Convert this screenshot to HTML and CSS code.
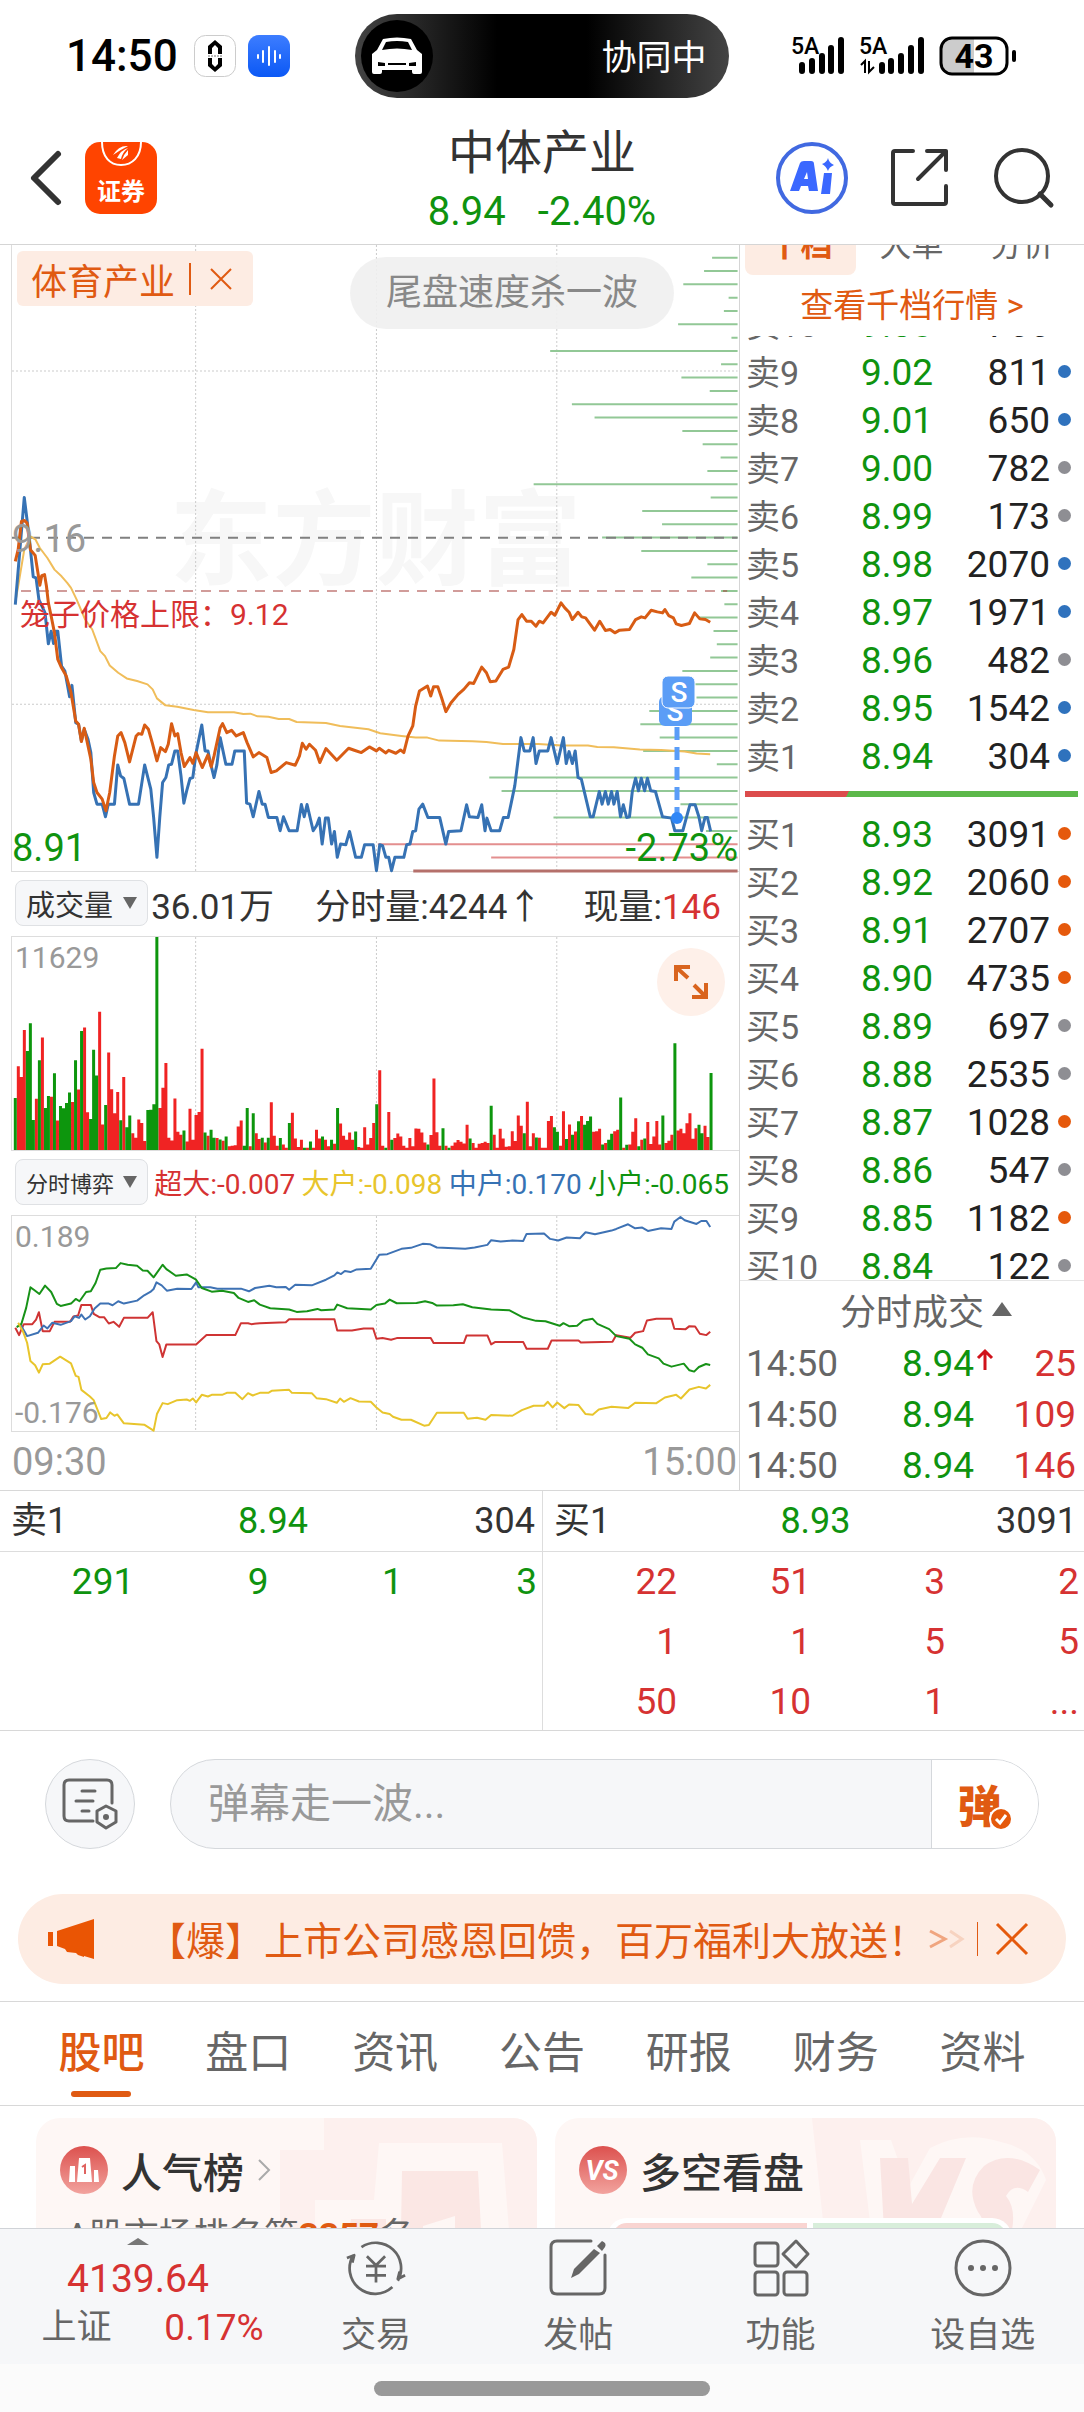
FILE: index.html
```html
<!DOCTYPE html>
<html lang="zh-CN">
<head>
<meta charset="utf-8">
<meta name="viewport" content="width=device-width, initial-scale=1">
<title>中体产业</title>
<link rel="stylesheet" href="styles.css">
</head>
<body>
<div class="app">

<div class="status">
  <div class="status-left">
    <span class="clock">14:50</span>
    <svg class="status-app" viewBox="0 0 42 42"><rect x=".5" y=".5" width="41" height="41" rx="11" fill="#fff" stroke="#ccc"/><path d="M21 5l7 6v8h-4v-6l-3-3-3 3v6h-4v-8zM21 37l7-6v-8h-4v6l-3 3-3-3v-6h-4v8z"/><path d="M14 21h14" stroke="#777" stroke-dasharray="2 1"/></svg>
    <svg class="status-app" viewBox="0 0 42 42"><defs><linearGradient id="voice" x2="0" y2="1"><stop stop-color="#3d7dff"/><stop offset="1" stop-color="#0b58f5"/></linearGradient></defs><rect width="42" height="42" rx="11" fill="url(#voice)"/><path d="M10 20v3M15 16v11M21 12v18M27 16v11M32 20v3" stroke="#fff" stroke-width="2" stroke-linecap="round"/></svg>
  </div>
  <div class="island">
    <span class="island-icon"><svg viewBox="0 0 52 38"><path d="M12 2Q26-1 40 2L46 13 51 17V35Q51 37 49 37H43Q41 37 41 35V33H11V35Q11 37 9 37H3Q1 37 1 35V17L6 13z" fill="#fff"/><path d="M15 5Q26 3 37 5L41 13Q26 10 11 13zM7 25l7 1v3H7zM45 25l-7 1v3h7zM17 26h18v2H17z" fill="#000"/></svg></span>
    <span>协同中</span>
  </div>
  <div class="status-right">
    <svg class="signal-a" viewBox="0 0 54 38"><text x="0" y="17" class="net">5A</text><path d="M11 28v6M21 24v10M31 19v15M40 11v23M50 3v31" stroke="#000" stroke-width="6" stroke-linecap="round"/></svg>
    <svg class="signal-b" viewBox="0 0 66 38"><text x="0" y="17" class="net">5A</text><path d="M23 28v6M32 24v10M42 19v15M52 11v23M62 3v31" stroke="#000" stroke-width="6" stroke-linecap="round"/><path d="M2 28l4-4v12M10 24v11l5-5" fill="none" stroke="#000" stroke-width="2"/></svg>
    <svg class="battery" viewBox="0 0 78 40"><path d="M35 2H12Q2 2 2 12V28Q2 38 12 38H35z" fill="#ccc"/><rect x="2" y="2" width="66" height="36" rx="11" fill="none" stroke="#000" stroke-width="3"/><path d="M75 16v8" stroke="#000" stroke-width="4" stroke-linecap="round"/><text x="35" y="32" text-anchor="middle" class="charge">43</text></svg>
  </div>
</div>

<header class="header">
  <div class="header-side">
    <button class="icon-btn back" aria-label="返回"><svg viewBox="0 0 32 54"><path d="M28 3L4 27 28 51" fill="none" stroke="#333" stroke-width="6" stroke-linecap="round" stroke-linejoin="round"/></svg></button>
    <a class="broker" href="#"><svg viewBox="0 0 72 32" aria-hidden="true"><path d="M17 0C17 15 25 23 36 23S56 15 56 0" fill="none" stroke="#fff" stroke-width="2"/><path d="M28 13Q34 3 43 4Q35 8 28 13zM32 16Q36 8 43 6Q37 11 36 17zM37 18Q39 12 43 8V13z" fill="#fff"/></svg><span>证券</span></a>
  </div>
  <div class="title">
    <h1>中体产业</h1>
    <p><span>8.94</span><span>-2.40%</span></p>
  </div>
  <div class="header-side header-actions">
    <button class="icon-btn ai" aria-label="Ai"><svg viewBox="0 0 72 72"><circle cx="36" cy="36" r="34" fill="none" stroke="#4169e1" stroke-width="4"/><path d="M14 49L24 21Q25 19 28 19H35Q38 19 38 22L42 49H33L32 44H25L23 49zM28 37H32L31 30zM48 31H56L54 52H45z" fill="#3b68ff" fill-rule="evenodd"/><path d="M52 16Q53 21 58 23Q53 25 52 29Q50 24 46 22Q51 20 52 16z" fill="#3b68ff"/></svg></button>
    <button class="icon-btn share" aria-label="分享"><svg viewBox="0 0 60 60"><path d="M23 3H5Q3 3 3 5V54Q3 56 5 56H54Q56 56 56 54V38M37 3H56V22M56 3L28 31" fill="none" stroke="#333" stroke-width="4" stroke-linecap="round" stroke-linejoin="round"/></svg></button>
    <button class="icon-btn search" aria-label="搜索"><svg viewBox="0 0 60 60"><circle cx="28" cy="28" r="26" fill="none" stroke="#333" stroke-width="4"/><path d="M46 46L57 57" stroke="#333" stroke-width="5" stroke-linecap="round"/></svg></button>
  </div>
</header>

<main class="content">
<section class="quote">
  <div class="charts">
    <div class="chart chart-price">
      <span class="watermark">东方财富</span>
      <svg class="plot" viewBox="25 -1006 1540 1882" preserveAspectRatio="none">
        <path class="grid" d="M414-1006V876M797-1006V876M1179-1006V876M25-627H1562M25 375H1562"/>
        <g id="depth"></g>
        <path d="M25-126H1562" stroke="#808080" stroke-width="2" stroke-dasharray="10 8"/>
        <path d="M44 34H1540" stroke="#a33a36" stroke-width="1" stroke-dasharray="10 8"/>
        <polyline class="line" stroke="#f0bd5a" points="33,60 38,20 51,-90 64,-130 75,-120 84,-95 100,-65 115,-30 130,-10 142,10 150,25 162,60 180,120 195,150 212,215 222,230 232,258 250,280 268,297 290,305 312,315 323,330 332,357 350,378 375,382 410,392 440,399 495,399 515,404 530,403 545,411 568,412 590,419 612,419 628,428 690,431 720,440 780,450 805,462 850,470 880,475 905,475 930,484 1000,486 1030,488 1065,494 1140,494 1190,499 1245,499 1265,503 1300,504 1355,511 1400,512 1450,517 1475,523 1504,525"/>
        <polyline class="line thick" stroke="#3672b4" points="32,75 51,-247 62,-120 70,-8 76,-5 82,60 95,100 102,193 108,155 113,192 118,155 122,155 130,260 137,275 147,352 152,318 160,430 166,435 172,485 178,450 186,480 192,520 198,640 205,675 216,675 223,713 229,675 242,675 249,557 255,590 262,598 274,675 293,675 306,557 319,630 325,715 332,835 338,715 344,610 351,595 357,557 363,555 370,515 376,515 383,590 389,672 395,635 402,598 408,595 415,520 427,437 434,515 440,515 446,555 453,595 459,557 466,475 478,555 491,555 497,515 517,515 522,672 529,675 536,713 548,637 555,675 561,675 568,715 586,715 593,755 600,713 612,755 629,755 638,676 644,713 650,676 663,755 670,740 676,717 682,795 689,717 695,717 702,795 708,757 714,835 721,795 732,797 740,757 753,835 765,835 772,797 790,797 797,875 804,797 810,800 817,835 823,835 829,875 836,835 855,835 861,797 868,795 874,757 880,755 887,690 895,675 906,715 931,715 944,795 950,757 976,755 988,677 994,713 1012,715 1020,677 1027,755 1031,717 1040,755 1058,755 1066,715 1076,715 1082,675 1090,620 1103,475 1110,515 1122,515 1129,475 1135,553 1142,515 1160,515 1167,475 1180,553 1193,475 1199,553 1205,517 1212,553 1218,515 1224,595 1231,600 1250,713 1256,713 1269,637 1275,675 1282,637 1288,675 1295,637 1300,675 1307,637 1314,713 1320,677 1327,715 1333,713 1339,637 1346,597 1352,635 1358,597 1365,635 1371,597 1378,635 1388,637 1403,713 1422,717 1429,755 1446,755 1454,713 1461,677 1472,677 1480,713 1486,755 1493,715 1498,715 1505,757"/>
        <polyline class="line thick" stroke="#d85c14" points="32,-55 38,-90 45,-175 51,-178 57,-170 64,-90 74,-73 80,-20 84,17 88,-12 94,-15 98,20 102,70 108,110 115,160 122,240 130,265 140,290 150,340 160,425 166,435 172,487 178,447 186,500 192,540 198,610 205,640 216,660 224,695 232,640 242,530 249,470 256,460 264,490 274,548 288,470 293,463 300,465 306,437 314,450 322,490 332,545 340,505 350,517 356,495 363,433 370,470 376,463 383,520 390,562 402,535 408,552 415,520 428,565 440,527 447,563 453,530 466,445 471,433 480,460 490,453 500,470 515,460 523,490 536,533 548,520 565,535 574,580 585,575 606,550 625,558 634,530 640,492 648,510 655,495 668,513 677,550 690,508 713,543 738,507 750,513 765,520 782,503 797,515 803,507 817,521 823,513 838,522 848,512 855,520 864,470 874,440 880,380 888,335 905,320 912,350 918,322 927,322 935,355 944,397 955,370 970,345 982,330 994,310 1003,312 1020,263 1030,280 1038,307 1050,305 1065,270 1077,263 1088,210 1097,120 1105,105 1115,125 1125,125 1135,140 1142,125 1150,130 1167,98 1175,107 1188,70 1196,85 1205,98 1212,120 1224,98 1232,112 1240,115 1259,152 1270,125 1282,153 1292,150 1302,160 1312,152 1333,150 1346,120 1358,112 1366,115 1379,92 1392,97 1403,100 1408,90 1416,108 1426,115 1432,133 1443,138 1460,132 1471,100 1482,118 1494,120 1504,128"/>
      </svg>
      <svg class="trade-mark" viewBox="0 0 40 152"><path d="M20 52V140" stroke="#5a9df8" stroke-width="5" stroke-dasharray="13 7"/><circle cx="20" cy="143" r="6" fill="#2f86f6"/><rect x="2" y="21" width="33" height="30" rx="6" fill="#5b9df6"/><text x="18" y="46" text-anchor="middle">S</text><rect x="5" y="1" width="33" height="32" rx="6" fill="#5b9df6" stroke="#fff"/><text x="22" y="27" text-anchor="middle">S</text></svg>
      <button class="sector">体育产业<span class="sector-rule"></span><svg viewBox="0 0 22 22"><path d="M1 1L21 21M21 1L1 21" stroke="#e05a12" stroke-width="2"/></svg></button>
      <span class="toast">尾盘速度杀一波</span>
      <span class="axis mid">9.16</span>
      <span class="cage">笼子价格上限：9.12</span>
      <span class="axis low down">8.91</span>
      <span class="axis low-right down">-2.73%</span>
    </div>
    <div class="legend legend-volume">
      <button class="picker">成交量<i></i></button>
      <span>36.01万</span><span>分时量:4244↑</span><span>现量:<b>146</b></span>
    </div>
    <div class="chart chart-volume">
      <svg class="plot" viewBox="25 47 1540 644" preserveAspectRatio="none">
        <path class="grid" d="M414 47V691M797 47V691M1179 47V691"/>
        <g id="volume"></g>
      </svg>
      <span class="axis small top">11629</span>
      <button class="expand" aria-label="全屏"><svg viewBox="0 0 34 34"><path d="M2 16V2H16M3 3L14 13M32 18V32H18M31 31L20 20" fill="none" stroke="#d9641e" stroke-width="4"/></svg></button>
    </div>
    <div class="legend legend-flow">
      <button class="picker long">分时博弈<i></i></button>
      <span class="up">超大:-0.007</span><span class="amber">大户:-0.098</span><span class="blue">中户:0.170</span><span class="down">小户:-0.065</span>
    </div>
    <div class="chart chart-flow">
      <svg class="plot" viewBox="25 43 1540 648" preserveAspectRatio="none">
        <path class="grid" d="M414 43V691M797 43V691M1179 43V691"/>
        <polyline class="line" stroke="#cf3434" points="32,380 40,402 45,385 50,369 68,369 76,355 82,333 90,390 105,390 115,362 148,362 155,346 165,343 172,311 192,311 198,338 210,348 220,348 230,367 240,362 252,377 262,350 312,350 323,333 331,420 337,430 344,468 352,430 415,430 437,402 498,402 510,366 525,366 532,369 550,366 605,363 612,354 708,354 714,388 745,388 770,382 790,382 797,413 810,411 828,416 840,411 912,411 918,426 982,426 988,403 1032,403 1040,430 1048,423 1108,423 1115,443 1160,443 1168,418 1225,418 1230,424 1297,422 1305,402 1335,410 1345,395 1362,390 1370,358 1390,353 1422,353 1428,383 1452,384 1460,375 1472,376 1482,398 1496,402 1504,392"/>
        <polyline class="line" stroke="#3e72b4" points="38,370 45,375 57,405 80,395 92,373 100,382 110,365 128,371 150,360 158,345 167,350 172,340 180,355 190,345 200,322 212,307 230,307 238,312 250,300 262,307 290,298 305,282 318,272 325,263 331,243 342,252 353,268 375,262 405,263 415,243 420,258 445,258 460,262 510,262 527,270 540,260 570,253 585,258 605,257 612,265 625,250 660,252 690,235 708,222 714,213 722,218 730,209 742,212 755,204 785,202 803,160 820,158 850,142 870,139 895,127 910,128 925,138 985,142 1005,138 1032,130 1040,116 1060,120 1085,117 1108,118 1115,97 1152,96 1165,112 1182,117 1200,108 1228,110 1240,92 1260,98 1295,87 1305,82 1330,68 1345,80 1360,78 1372,88 1400,80 1422,82 1428,60 1441,46 1450,56 1475,67 1485,58 1496,58 1504,76"/>
        <polyline class="line" stroke="#179217" points="35,378 45,368 55,320 64,258 72,266 83,278 95,253 108,272 120,308 128,314 150,307 160,293 168,300 182,272 192,270 202,245 212,205 225,201 245,200 255,185 270,190 290,193 302,207 312,208 325,228 344,190 352,203 372,223 395,219 415,235 427,260 448,271 470,268 495,275 505,290 525,302 538,297 550,310 572,321 612,325 628,332 650,330 672,323 680,327 708,325 714,310 735,321 785,325 797,311 815,307 825,295 840,306 882,305 900,300 915,305 925,313 960,312 980,309 1000,318 1040,325 1078,327 1108,349 1135,359 1155,360 1185,374 1193,366 1205,375 1222,374 1235,358 1255,353 1265,368 1290,384 1305,405 1333,413 1345,430 1360,440 1372,460 1395,472 1405,488 1422,497 1448,488 1460,508 1470,512 1480,498 1495,489 1504,492"/>
        <polyline class="line" stroke="#e8c52c" points="38,365 48,390 57,425 64,480 74,493 82,515 90,490 105,488 127,467 150,487 160,525 166,528 172,567 190,587 198,598 214,655 225,652 233,635 242,645 248,641 262,668 305,672 325,690 332,640 344,607 355,610 375,598 395,596 402,600 408,593 415,605 427,582 440,587 448,582 470,582 480,576 498,576 513,595 525,577 535,584 550,576 568,576 575,570 612,567 618,576 660,577 670,592 690,595 713,606 720,593 728,603 742,592 760,602 785,603 797,620 810,635 825,640 832,648 850,657 870,657 898,675 908,673 925,636 982,636 990,654 1010,651 1028,657 1040,643 1085,645 1105,628 1130,615 1152,615 1160,603 1170,620 1180,605 1195,622 1205,611 1225,613 1240,640 1255,642 1268,626 1295,618 1330,622 1345,606 1390,607 1408,590 1432,582 1442,593 1460,566 1480,558 1495,563 1504,552"/>
      </svg>
      <span class="axis small top">0.189</span>
      <span class="axis small bottom">-0.176</span>
    </div>
    <div class="times"><span>09:30</span><span>15:00</span></div>
  </div>

  <aside class="book">
    <div class="book-tabs"><button class="on">十档</button><button>大单</button><button>分价</button></div>
    <a class="book-more" href="#">查看千档行情 &gt;</a>
    <div class="levels">
      <table class="sells">
        <tr><th>卖10</th><td>9.03</td><td>766</td><td><i class="dot blue"></i></td></tr>
        <tr><th>卖9</th><td>9.02</td><td>811</td><td><i class="dot blue"></i></td></tr>
        <tr><th>卖8</th><td>9.01</td><td>650</td><td><i class="dot blue"></i></td></tr>
        <tr><th>卖7</th><td>9.00</td><td>782</td><td><i class="dot"></i></td></tr>
        <tr><th>卖6</th><td>8.99</td><td>173</td><td><i class="dot"></i></td></tr>
        <tr><th>卖5</th><td>8.98</td><td>2070</td><td><i class="dot blue"></i></td></tr>
        <tr><th>卖4</th><td>8.97</td><td>1971</td><td><i class="dot blue"></i></td></tr>
        <tr><th>卖3</th><td>8.96</td><td>482</td><td><i class="dot"></i></td></tr>
        <tr><th>卖2</th><td>8.95</td><td>1542</td><td><i class="dot blue"></i></td></tr>
        <tr><th>卖1</th><td>8.94</td><td>304</td><td><i class="dot blue"></i></td></tr>
      </table>
      <div class="ratio"></div>
      <table>
        <tr><th>买1</th><td>8.93</td><td>3091</td><td><i class="dot orange"></i></td></tr>
        <tr><th>买2</th><td>8.92</td><td>2060</td><td><i class="dot orange"></i></td></tr>
        <tr><th>买3</th><td>8.91</td><td>2707</td><td><i class="dot orange"></i></td></tr>
        <tr><th>买4</th><td>8.90</td><td>4735</td><td><i class="dot orange"></i></td></tr>
        <tr><th>买5</th><td>8.89</td><td>697</td><td><i class="dot"></i></td></tr>
        <tr><th>买6</th><td>8.88</td><td>2535</td><td><i class="dot"></i></td></tr>
        <tr><th>买7</th><td>8.87</td><td>1028</td><td><i class="dot orange"></i></td></tr>
        <tr><th>买8</th><td>8.86</td><td>547</td><td><i class="dot"></i></td></tr>
        <tr><th>买9</th><td>8.85</td><td>1182</td><td><i class="dot orange"></i></td></tr>
        <tr><th>买10</th><td>8.84</td><td>122</td><td><i class="dot"></i></td></tr>
      </table>
    </div>
    <button class="ticks-title">分时成交<i></i></button>
    <table class="ticks">
      <tr><td>14:50</td><td>8.94<svg viewBox="0 0 16 22"><path d="M8 21V2M1 9L8 2L15 9" fill="none" stroke="#d0121b" stroke-width="3"/></svg></td><td>25</td></tr>
      <tr><td>14:50</td><td>8.94</td><td>109</td></tr>
      <tr><td>14:50</td><td>8.94</td><td>146</td></tr>
    </table>
  </aside>
</section>

<section class="queues">
  <div class="queue down">
    <div class="queue-head"><span>卖1</span><span class="down">8.94</span><span>304</span></div>
    <div class="queue-grid"><span>291</span><span>9</span><span>1</span><span>3</span></div>
  </div>
  <div class="queue up">
    <div class="queue-head"><span>买1</span><span class="down">8.93</span><span>3091</span></div>
    <div class="queue-grid"><span>22</span><span>51</span><span>3</span><span>2</span><span>1</span><span>1</span><span>5</span><span>5</span><span>50</span><span>10</span><span>1</span><span>...</span></div>
  </div>
</section>

<form class="comment">
  <button type="button" class="comment-set" aria-label="弹幕设置"><svg viewBox="0 0 56 52"><path d="M31 43H7Q2 43 2 38V7Q2 2 7 2H45Q50 2 50 7V25M20 13H33M14 23H31M20 33H27" fill="none" stroke="#666" stroke-width="3" stroke-linecap="round"/><path d="M44 28L54 33V44L44 50L35 44V33z" fill="#f6f7f9" stroke="#666" stroke-width="3" stroke-linejoin="round"/><circle cx="44" cy="39" r="3" fill="#666"/></svg></button>
  <div class="comment-box">
    <input type="text" aria-label="弹幕" placeholder="弹幕走一波...">
    <button type="button">弹<svg viewBox="0 0 24 24"><circle cx="12" cy="12" r="11" fill="#e5590c" stroke="#fff" stroke-width="2"/><path d="M7 12l4 4 6-8" fill="none" stroke="#fff" stroke-width="3"/></svg></button>
  </div>
</form>

<div class="banner">
  <svg class="horn" viewBox="0 0 48 40"><path d="M0 13H5V27H0zM9 12L46 0V40L36 37V38L30 36L28 34L19 33L17 30L9 27z" fill="#ea5504"/></svg>
  <a href="#">【爆】上市公司感恩回馈，百万福利大放送！</a>
  <svg class="chevrons" viewBox="0 0 34 20"><path d="M2 2L17 10L2 18" fill="none" stroke="#f0a57f" stroke-width="3"/><path d="M22 2L34 10L22 18" fill="none" stroke="#f7d3c0" stroke-width="3"/></svg>
  <button aria-label="关闭"><svg viewBox="0 0 34 34"><path d="M2 2L32 32M32 2L2 32" stroke="#e5590c" stroke-width="3"/></svg></button>
</div>

<nav class="tabs"><a class="on" href="#">股吧</a><a href="#">盘口</a><a href="#">资讯</a><a href="#">公告</a><a href="#">研报</a><a href="#">财务</a><a href="#">资料</a></nav>

<section class="cards">
  <article class="card">
    <svg class="card-art" viewBox="0 0 260 112"><path d="M47 0H260V112H3V32H47z" fill="#fdf0ee"/><path d="M38 112V82H97L102 25H225L232 112z" fill="#fef7f5"/><path d="M125 53H201L204 112H178V98L146 108V112H124z" fill="#fbe7e4"/><path d="M74 101H109V112H72z" fill="#fbe7e4"/></svg>
    <h2><svg viewBox="0 0 48 48"><defs><linearGradient id="badge" x2="0" y2="1"><stop stop-color="#dc514e"/><stop offset="1" stop-color="#f2a39e"/></linearGradient></defs><circle cx="24" cy="24" r="24" fill="url(#badge)"/><path d="M10 20H15V36H9zM19 12H30L32 36H17zM34 24H38L39 36H34z" fill="#fff"/><path d="M22 21l3-2v9" fill="none" stroke="#df6360" stroke-width="2"/></svg>人气榜<svg class="more" viewBox="0 0 14 24"><path d="M2 2L12 12L2 22" fill="none" stroke="#aaa" stroke-width="2"/></svg></h2>
    <p>A股市场排名第<b>3357</b>名</p>
  </article>
  <article class="card">
    <svg class="card-art" viewBox="0 0 260 112"><path d="M16 0H260V112H28z" fill="#fdf0ee"/><path d="M64 22H95L112 70L134 30Q168 12 205 24Q240 32 250 62L225 112H75z" fill="#fef7f5"/><path d="M84 40H112L116 86L144 40H170L140 112H88zM244 52Q212 30 188 48Q168 68 182 94Q190 104 184 112H216Q220 90 210 78Q218 64 232 74z" fill="#fae5e3"/></svg>
    <h2><svg viewBox="0 0 48 48"><circle cx="24" cy="24" r="24" fill="url(#badge)"/><text x="23" y="34" text-anchor="middle">VS</text></svg>多空看盘</h2>
    <div class="poll"><span></span><span></span></div>
  </article>
</section>
</main>

<nav class="dock">
  <a class="index" href="#"><i></i><strong>4139.64</strong><span>上证</span><em>0.17%</em></a>
  <a href="#"><svg viewBox="0 0 66 60"><path d="M17 7A28 28 0 0 1 57 44M51 51A28 28 0 0 1 8 16M1 19L9 16 7 24M65 38L57 42 59 34" fill="none" stroke="#666" stroke-width="3" stroke-linejoin="round"/><path d="M23 17l10 10 10-10M22 28H44M22 38H44M33 27V46" fill="none" stroke="#666" stroke-width="3"/></svg>交易</a>
  <a href="#"><svg viewBox="0 0 60 60"><path d="M43 3H9Q3 3 3 9V50Q3 56 9 56H51Q57 56 57 50V17" fill="none" stroke="#666" stroke-width="3" stroke-linecap="round"/><path d="M46 11L52 15L31 36L23 40L26 31zM49 8L54 3Q59 5 57 9L54 13z" fill="#666"/></svg>发帖</a>
  <a href="#"><svg viewBox="0 0 60 60"><g fill="none" stroke="#666" stroke-width="3"><rect x="4" y="5" width="23" height="23" rx="3"/><rect x="4" y="34" width="23" height="23" rx="3"/><rect x="33" y="34" width="23" height="23" rx="3"/><path d="M45 3L57 16 45 29 32 16z" stroke-linejoin="round"/></g></svg>功能</a>
  <a href="#"><svg viewBox="0 0 60 60"><circle cx="30" cy="30" r="27" fill="none" stroke="#666" stroke-width="3"/><g fill="#666"><circle cx="18" cy="30" r="3"/><circle cx="30" cy="30" r="3"/><circle cx="42" cy="30" r="3"/></g></svg>设自选</a>
</nav>
<div class="home"><span></span></div>
</div>
<script src="charts.js"></script>
</body>
</html>
```
FILE: charts.js
```js
// Top of each minute's volume bar on a 47-691 scale; a negative value is a falling minute.
const volume = [-534,438,470,328,-392,-308,-600,536,-420,351,-564,-528,530,-459,602,-558,-565,-549,-517,546,-420,508,-331,321,577,-597,-388,-466,273,614,-555,396,507,580,516,-601,470,-622,-587,640,654,599,609,664,-570,-569,-553,-47,564,503,428,654,662,535,636,645,-632,665,566,660,585,576,385,-638,648,-630,-654,655,-659,663,-650,680,678,677,620,602,-678,-564,680,-580,640,658,-654,668,-654,547,648,678,-655,674,684,-609,578,656,682,660,-684,684,-665,684,630,656,-650,660,680,-660,672,-564,611,648,660,638,660,-635,682,684,622,674,655,609,-553,450,678,-684,576,-660,655,641,650,678,684,655,680,626,627,638,668,-674,646,475,637,678,-625,678,-684,678,668,661,666,671,615,-656,670,684,672,670,666,670,-557,645,684,627,656,681,680,634,664,587,618,-640,545,680,640,-653,654,684,684,603,588,-622,-636,678,574,-658,614,-645,635,-604,588,-615,-603,-590,636,634,627,-674,670,-660,-642,634,630,-532,684,-675,674,636,595,-680,660,-656,606,673,650,603,674,-587,670,663,645,-368,632,627,640,610,580,657,625,-615,-640,618,652,-458];

// Left end of each resting-order line, one per price level from the top of the chart.
const depth = [1508,1491,1447,1543,1533,1436,1549,1165,1527,1443,1503,1211,1259,1445,1488,1526,1498,1130,1505,1360,1402,1275,1358,1498,1464,1527,1534,1478,1511,1518,1504,1445,1453,1475,1375,1356,1397,1362,1518,1036,1062,1441,1172,1495,800,1040,875];

const path = (host, d, stroke, width) => {
  const p = document.createElementNS('http://www.w3.org/2000/svg', 'path');
  p.setAttribute('d', d);
  p.setAttribute('stroke', stroke);
  p.setAttribute('stroke-width', width);
  document.getElementById(host).append(p);
};

const bars = test => volume.map((v, i) => test(v) ? `M${32 + 6.38 * i} 691V${Math.abs(v)}` : '').join('');
path('volume', bars(v => v > 0), '#f02323', 3);
path('volume', bars(v => v < 0), '#0d960d', 3);

const rows = (from, to) => depth.slice(from, to).map((x, i) => `M${x} ${-968 + 40.08 * (from + i)}H1562`).join('');
path('depth', rows(0, 44), '#92c896', 2);
path('depth', rows(44, 46), '#e38f8f', 2);
path('depth', rows(46, 47), '#b5706b', 3);
```
FILE: styles.css
```css
* { box-sizing: border-box; margin: 0; padding: 0; }
body { font-family: Roboto, "Noto Sans CJK SC", sans-serif; color: #333; background: #fff; }
a { color: inherit; text-decoration: none; }
button { font: inherit; color: inherit; background: none; border: 0; }
svg { display: block; flex: none; overflow: visible; }
i, em { font-style: normal; }
.up { color: #d63232; }
.down { color: #0f930f; }
.amber { color: #e8c52c; }
.blue { color: #3672b4; }

.app { display: flex; flex-direction: column; height: 100vh; }
.content { flex: 1; min-height: 0; overflow: hidden; }

/* status bar */
.status { display: flex; align-items: center; height: 112px; flex: none; }
.status-left, .status-right { flex: 1; display: flex; align-items: center; }
.status-left { padding-left: 66px; gap: 12px; }
.clock { font-size: 44px; font-weight: 500; color: #000; margin-right: 4px; }
.status-app { width: 42px; height: 42px; }
.island { width: 374px; height: 84px; border-radius: 42px; padding: 0 22px 4px 6px; display: flex; align-items: center; justify-content: space-between; color: #fff; font-size: 35px; background: linear-gradient(90deg, #444, #000 38%, #000 62%, #444); }
.island-icon { width: 72px; height: 72px; margin-top: 4px; border-radius: 50%; background: #000; display: grid; place-items: center; }
.island-icon svg { width: 52px; height: 38px; }
.status-right { justify-content: flex-end; padding-right: 67px; gap: 14px; }
.signal-a { width: 54px; height: 38px; }
.signal-b { width: 66px; height: 38px; }
.battery { width: 78px; height: 40px; }
.net { font-size: 23px; font-weight: 500; }
.charge { font-size: 34px; font-weight: 700; }

/* header */
.header { display: flex; align-items: center; flex: none; height: 133px; border-bottom: 1px solid #d5d5d5; }
.header-side { flex: 1; display: flex; align-items: center; }
.icon-btn svg { width: 100%; height: 100%; }
.back { width: 32px; height: 54px; margin: 0 23px 0 30px; }
.broker { width: 72px; height: 72px; border-radius: 15px; background: #ff4400; color: #fff; font: 700 24px/32px "Noto Sans CJK SC", sans-serif; text-align: center; }
.broker svg { width: 72px; height: 32px; }
.title { text-align: center; padding-top: 4px; }
.title h1 { font-size: 47px; line-height: 64px; font-weight: 400; }
.title p { display: flex; justify-content: center; gap: 32px; font-size: 40px; line-height: 54px; color: #0f930f; }
.header-actions { justify-content: flex-end; }
.ai { width: 72px; height: 72px; margin-right: 42px; }
.share { width: 60px; height: 60px; margin-right: 44px; }
.search { width: 60px; height: 60px; margin-right: 30px; }

/* charts */
.quote { display: grid; grid-template-columns: minmax(0, 1fr) 345px; }
.chart { position: relative; margin-left: 11px; border: solid #ddd; border-width: 1px 0 1px 1px; }
.chart > * { position: absolute; }
.chart-price { height: 627px; border-top: 0; }
.chart-volume { height: 215px; }
.chart-flow { height: 217px; }
.plot { inset: 0; width: 100%; height: 100%; }
.plot * { vector-effect: non-scaling-stroke; }
.grid { stroke: #ccc; stroke-width: 1; stroke-dasharray: 2 2; }
.line { fill: none; stroke-width: 2; stroke-linejoin: round; }
.thick { stroke-width: 3; }
.watermark { left: 0; right: 0; top: 237px; text-align: center; color: #f7f7f7; font-size: 103px; line-height: 120px; font-weight: 700; }
.trade-mark { width: 40px; height: 152px; right: 42px; top: 430px; }
.trade-mark text { fill: #fff; font-size: 28px; font-weight: 500; }
.sector { left: 5px; top: 6px; height: 55px; padding: 0 21px 0 14px; display: flex; align-items: center; gap: 14px; border-radius: 6px; background: #fdece3; color: #e05a12; font-size: 36px; }
.sector-rule { width: 2px; height: 32px; background: #e05a12; }
.sector svg { width: 22px; height: 22px; margin-left: 5px; }
.toast { right: 65px; top: 12px; width: 324px; line-height: 72px; border-radius: 36px; background: rgba(240, 240, 240, .9); color: #888; font-size: 36px; text-align: center; }
.axis { left: 0; font-size: 38px; line-height: 44px; color: #999; }
.axis.down { color: #0f930f; }
.mid { top: 272px; }
.low { bottom: 1px; }
.low-right { left: auto; right: 1px; bottom: 1px; }
.small { left: 3px; font-size: 30px; line-height: 36px; }
.top { top: 3px; }
.bottom { bottom: 0; }
.cage { left: 8px; top: 350px; font-size: 30px; line-height: 40px; color: #d63232; }
.expand { right: 14px; top: 11px; width: 68px; height: 68px; border-radius: 50%; background: #fef0e9; display: grid; place-items: center; }
.expand svg { width: 34px; height: 34px; }
.legend { display: flex; align-items: center; height: 64px; padding: 0 10px 2px 15px; white-space: nowrap; }
.picker { display: flex; align-items: center; justify-content: space-between; width: 133px; height: 46px; padding: 0 10px; background: #f6f7f9; border: 1px solid #dfe1e4; border-radius: 8px; font-size: 29px; }
.picker.long { font-size: 22px; }
.picker i { border: solid transparent; border-width: 12px 7px 0; border-top-color: #666; }
.legend-volume { font-size: 35px; justify-content: space-between; padding-right: 18px; }
.legend-volume .picker { margin-right: -38px; }
.legend-volume b { font-weight: 400; color: #d63232; }
.legend-flow { font-size: 28px; justify-content: space-between; }
.times { display: flex; justify-content: space-between; padding: 0 2px 0 12px; height: 58px; font-size: 38px; line-height: 60px; color: #999; }

/* order book */
.book { display: flex; flex-direction: column; min-height: 0; overflow: hidden; border-left: 1px solid #d5d5d5; }
.book-tabs { display: grid; grid-template-columns: repeat(3, 1fr); height: 60px; margin: -30px 6px 0 5px; font-size: 32px; color: #666; flex: none; }
.book-tabs button { padding-bottom: 6px; }
.book-tabs .on { background: #fdece3; color: #e05a12; font-weight: 700; border-radius: 8px; }
.book-more { text-align: center; font-size: 33px; line-height: 62px; height: 61px; color: #e05a12; flex: none; }
.levels { flex: 1 1 0; min-height: 0; overflow: hidden; border-bottom: 1px solid #e5e5e5; }
.book table { width: 100%; table-layout: fixed; border-collapse: collapse; }
.sells { margin-top: -35px; }
.levels tr { height: 48px; font-size: 37px; line-height: 48px; }
.levels th { width: 121px; padding-left: 6px; text-align: left; font-weight: 400; font-size: 34px; color: #666; }
.levels td { width: 90px; color: #0f930f; }
.levels td:nth-child(3) { width: auto; text-align: right; color: #222; }
.levels td:last-child { width: 34px; padding-left: 8px; }
.dot { display: block; width: 13px; height: 13px; margin-bottom: 3px; border-radius: 50%; background: #8e8e93; }
.dot.blue { background: #2f72bd; }
.dot.orange { background: #e5590c; }
.ratio { height: 6px; margin: 10px 6px 14px 5px; background: linear-gradient(120deg, #dc4c4c 31%, #5cb84a 31%); }
.ticks-title { display: flex; align-items: center; justify-content: center; gap: 8px; height: 56px; padding-left: 28px; font-size: 36px; color: #666; flex: none; }
.ticks-title i { border: solid transparent; border-width: 0 10px 14px; border-bottom-color: #666; }
.ticks tr { height: 51px; font-size: 37px; line-height: 49px; }
.ticks td { color: #d63232; text-align: right; padding: 2px 8px 0 0; }
.ticks td:first-child { width: 162px; padding: 2px 0 0 6px; text-align: left; color: #666; }
.ticks td:nth-child(2) { width: 100px; padding: 2px 0 0; text-align: left; color: #0f930f; }
.ticks svg { display: inline-block; width: 16px; height: 22px; margin-left: 3px; vertical-align: 5px; }

/* order queues */
.queues { display: grid; grid-template-columns: 1fr 1fr; border: solid #d8d8d8; border-width: 1px 0; font-size: 37px; line-height: 60px; }
.queue + .queue { border-left: 1px solid #ddd; }
.queue-head { display: grid; grid-template-columns: 1fr auto 1fr; padding: 0 7px 0 11px; border-bottom: 1px solid #ddd; color: #333; font-size: 36px; }
.queue-head span:last-child { text-align: right; }
.queue-grid { display: grid; grid-template-columns: repeat(4, 1fr); grid-template-rows: 60px 60px 58px; padding-right: 5px; text-align: right; }

/* comment */
.comment { display: flex; gap: 35px; padding: 28px 45px 45px; }
.comment-set { width: 90px; height: 90px; flex: none; display: grid; place-items: center; border: 1px solid #d5d8dc; border-radius: 50%; background: #f6f7f9; }
.comment-set svg { width: 56px; height: 52px; }
.comment-box { flex: 1; display: flex; height: 90px; border: 1px solid #d5d8dc; border-radius: 45px; overflow: hidden; background: #f6f7f9; }
.comment-box input { flex: 1; min-width: 0; border: 0; background: none; padding: 0 37px; font: inherit; font-size: 41px; }
.comment-box input::placeholder { color: #999; opacity: 1; }
.comment-box button { position: relative; width: 107px; padding-right: 11px; border-left: 1px solid #d5d8dc; background: #fff; color: #e05a12; font-size: 44px; font-weight: 900; }
.comment-box button svg { position: absolute; right: 25px; bottom: 17px; width: 24px; height: 24px; }

/* banner */
.banner { display: flex; align-items: center; height: 90px; margin: 0 18px 17px; padding: 0 37px 0 30px; border-radius: 45px; background: #fdece3; color: #e05a12; font-size: 39px; white-space: nowrap; }
.horn { width: 48px; height: 40px; }
.banner a { margin-left: 51px; margin-right: auto; padding-bottom: 3px; }
.chevrons { width: 34px; height: 20px; margin-right: 15px; }
.banner button { border-left: 1px solid #e05a12; padding-left: 17px; }
.banner button svg { width: 34px; height: 34px; }

/* section tabs */
.tabs { display: grid; grid-template-columns: repeat(7, 1fr); padding: 0 28px; border: solid #d8d8d8; border-width: 1px 0; font-size: 43px; line-height: 103px; text-align: center; color: #666; }
.tabs .on { position: relative; color: #e05a12; font-weight: 500; }
.tabs .on::after { content: ""; position: absolute; left: 50%; bottom: 8px; width: 60px; height: 6px; margin-left: -30px; border-radius: 3px; background: #e05a12; }

/* cards */
.cards { display: grid; grid-template-columns: 1fr 1fr; gap: 18px; padding: 12px 28px 0 36px; }
.card { position: relative; height: 280px; padding: 23px 24px; border-radius: 24px; overflow: hidden; background: #fef7f5; }
.card > * { position: relative; }
.card .card-art { position: absolute; right: 0; top: 0; width: 260px; height: 112px; }
.card h2 { display: flex; align-items: center; gap: 13px; height: 60px; padding-bottom: 2px; font-size: 41px; font-weight: 500; }
.card h2 svg { width: 48px; height: 48px; }
.card h2 text { fill: #fff; font: italic 700 27px Roboto, sans-serif; }
.card h2 .more { width: 14px; height: 24px; }
.card p { margin: 12px 0 0 6px; font-size: 35px; line-height: 48px; color: #666; }
.card b { color: #e05a12; }
.poll { display: flex; gap: 6px; margin: 17px 20px 0 28px; padding: 5px; border-radius: 20px; background: #fff; height: 60px; }
.poll span { flex: 1; background: #f9d5d2; border-radius: 15px 0 0 15px; }
.poll span + span { background: #d8eedb; border-radius: 0 15px 15px 0; }

/* bottom dock */
.dock { display: grid; grid-template-columns: 275px repeat(4, 1fr); flex: none; height: 136px; border-top: 1px solid #d0d3d8; background: #f6f7f9; font-size: 35px; color: #666; }
.dock a { display: flex; flex-direction: column; align-items: center; padding-top: 9px; line-height: 76px; height: 135px; }
.dock a > svg { width: 60px; height: 60px; }
.dock .index { display: grid; grid-template-columns: auto auto; justify-content: space-between; align-content: start; justify-items: center; padding: 9px 11px 0 41px; font-size: 35px; line-height: 50px; }
.index i { grid-column: 1 / -1; border: solid transparent; border-width: 0 11px 7px; border-bottom-color: #777; margin-right: 29px; }
.index strong { grid-column: 1 / -1; margin-right: 29px; padding-top: 10px; font-size: 39px; line-height: 48px; font-weight: 400; color: #d63232; }
.index em { font-size: 37px; color: #d63232; }
.home { height: 48px; flex: none; display: grid; place-items: center; background: #fbfbfb; }
.home span { width: 336px; height: 15px; border-radius: 8px; background: #999; }
```
